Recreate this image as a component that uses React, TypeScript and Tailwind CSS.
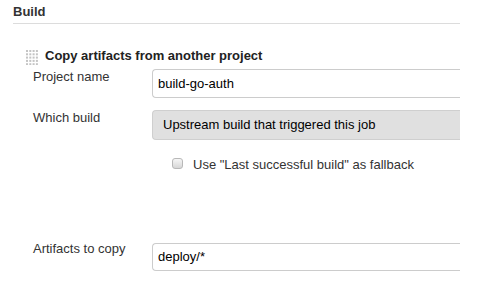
import React from "react";

function DragHandle() {
  const dots: React.ReactElement[] = [];
  for (let r = 0; r < 5; r++) {
    for (let c = 0; c < 4; c++) {
      dots.push(
        <rect key={`${r}-${c}`} x={c * 3.3} y={r * 3.3} width={2} height={2} fill="#c4c4c4" />
      );
    }
  }
  return (
    <svg width="12" height="15" viewBox="0 0 12 15" className="mt-[2px] shrink-0">
      {dots}
    </svg>
  );
}

export default function App() {
  return (
    <div className="h-[284px] w-[487px] overflow-hidden bg-white font-['Liberation_Sans',Arial,sans-serif] text-[13px] leading-4 text-[#333]">
      {/* Section header */}
      <div className="ml-[13px] w-[447px] border-b border-[#dcdcdc] pt-[4px] pb-[3px] font-bold">
        Build
      </div>

      {/* Build step */}
      <div className="mt-[24px] ml-[26px] flex items-start gap-[7px]">
        <DragHandle />
        <span className="font-bold text-[#222]">Copy artifacts from another project</span>
      </div>

      <div className="ml-[33px] mt-[4px] grid grid-cols-[119px_308px] items-start">
        <label>Project name</label>
        <div className="flex h-[29px] items-center rounded-l-[4px] border border-r-0 border-[#cccccc] px-[5px] text-black">
          build-go-auth
        </div>

        <label className="mt-[12px]">Which build</label>
        <div className="mt-[12px] flex h-[30px] items-center rounded-l-[4px] border border-r-0 border-[#cfcfcf] bg-[#e0e0e0] pl-[10px] text-black">
          Upstream build that triggered this job
        </div>

        <div />
        <div className="mt-[17px] flex items-start gap-[10px] pl-[20px]">
          <span className="mt-[1px] h-[11px] w-[11px] rounded-[3px] border border-[#b8b8b8] bg-linear-to-b from-[#f6f6f6] to-[#d6d6d6]" />
          <span>Use "Last successful build" as fallback</span>
        </div>

        <label className="mt-[68px]">Artifacts to copy</label>
        <div className="mt-[70px] flex h-[28px] items-center rounded-l-[4px] border border-r-0 border-[#cccccc] px-[5px] text-black">
          deploy/*
        </div>
      </div>
    </div>
  );
}
